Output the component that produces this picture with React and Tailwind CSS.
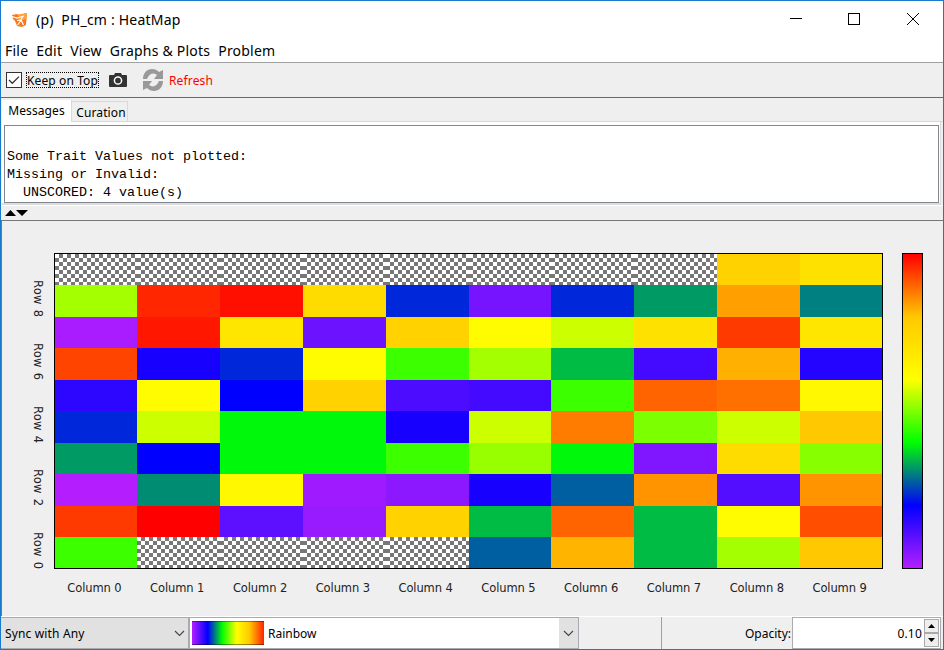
import React from "react";

const UI = "font-['Noto_Sans','Open_Sans',sans-serif]";

const cells = [
  ["x", "x", "x", "x", "x", "x", "x", "x", "#ffd200", "#ffe100"],
  ["#a4ff00", "#ff2600", "#ff0f00", "#ffdc00", "#0028da", "#7714ff", "#0028da", "#009a65", "#ffa000", "#008080"],
  ["#a81cff", "#ff1700", "#ffe600", "#6c12ff", "#ffd200", "#fffb00", "#ccff00", "#ffe100", "#ff3a00", "#ffe600"],
  ["#ff4400", "#1800ff", "#0028da", "#fffb00", "#3cff00", "#a4ff00", "#00bb44", "#440aff", "#ffb000", "#2404ff"],
  ["#2c06ff", "#fffb00", "#0000ff", "#ffd200", "#4c0cff", "#440aff", "#3cff00", "#ff6400", "#ff7000", "#fff800"],
  ["#0028da", "#ccff00", "#00f80a", "#00f80a", "#1800ff", "#ccff00", "#ff7c00", "#7cff00", "#ccff00", "#ffc800"],
  ["#009a65", "#0000ff", "#00f80a", "#00f80a", "#3cff00", "#98ff00", "#00f80a", "#8016ff", "#ffdc00", "#88ff00"],
  ["#b41eff", "#008c73", "#fff800", "#a01aff", "#8c18ff", "#1800ff", "#005fa0", "#ff9400", "#540eff", "#ff9400"],
  ["#ff3a00", "#ff0000", "#5c10ff", "#981aff", "#ffd200", "#00bb44", "#ff6400", "#00bb44", "#fffb00", "#ff4e00"],
  ["#3cff00", "x", "x", "x", "x", "#005fa0", "#ffb400", "#00bb44", "#a4ff00", "#ffc800"],
];

function Chevron() {
  return (
    <svg className="mt-px" width="11" height="7" viewBox="0 0 11 7" fill="none" stroke="#444" strokeWidth="1.1">
      <path d="M1 1l4.5 4.5L10 1" />
    </svg>
  );
}

function TitleBar() {
  return (
    <div className="flex h-[38px] shrink-0 items-center pb-[2px] pl-[10px]">
      <svg className="mt-px" width="17" height="16" viewBox="0 0 17 16">
        <path d="M1 3L6 2 8 3 16 1 15 13 11 15 6 14 4 9 2 7z" fill="#f47b20" />
        <path d="M7 2.500l9-1.500-.6 6-7 2z" fill="#ffa23a" />
        <path d="M1 4.500l5 1.500 7-2M11.500 5l-2 4-3 4M6 8.500l4-.5 2.500 5" stroke="#fff" strokeWidth="1.2" fill="none" />
      </svg>
      <span className="ml-[8px] whitespace-pre text-[14px] tracking-[0.2px]">(p)  PH_cm : HeatMap</span>
      <svg className="ml-auto mr-[22px]" width="132" height="14" viewBox="0 0 132 14" fill="none" stroke="#000" shapeRendering="crispEdges">
        <path d="M1 6.5h12" />
        <rect x="59.5" y="1.5" width="11" height="11" />
        <path d="M118 1l12 12M130 1l-12 12" shapeRendering="auto" />
      </svg>
    </div>
  );
}

function Toolbar() {
  return (
    <div className="flex h-[35px] shrink-0 items-center border-t border-[#a0a0a0] bg-[#efefef] pl-[5px] text-[12px]">
      <svg width="16" height="16" viewBox="0 0 16 16" fill="#fff" stroke="#333">
        <rect x=".5" y=".5" width="15" height="15" />
        <path d="M3 8l3.3 3.3L13 4.6" fill="none" strokeWidth="1.3" />
      </svg>
      <span className="ml-[4px] flex h-[16px] w-[73px] items-center justify-center whitespace-nowrap border border-dotted border-black pt-[2px] tracking-[0.1px]">Keep on Top</span>
      <svg className="ml-[10px]" width="18" height="14" viewBox="0 0 18 14">
        <path d="M1 2h4l1-2h6l1 2h4q1 0 1 1v10q0 1-1 1H1q-1 0-1-1V3q0-1 1-1z" fill="#333" />
        <circle cx="9" cy="7.5" r="3.6" fill="none" stroke="#fff" strokeWidth="1.5" />
      </svg>
      <svg className="ml-[15px]" width="22" height="22" viewBox="0 0 22 22" fill="#999">
        <path d="M1 10C1 4 5 0 10 0c3 0 5 1 7 3l4-2v9h-9l3-4C11 3 7 5 5 10z" />
        <path d="M21 12c0 6-4 10-9 10-3 0-5-1-7-3l-4 2v-9h9l-3 4c4 3 8 1 10-4z" />
      </svg>
      <span className="ml-[5px] pt-[2px] tracking-[0.15px] text-[#ff0000]">Refresh</span>
    </div>
  );
}

function Messages() {
  return (
    <div className="h-[109px] shrink-0 border-t border-[#696969] bg-[#efefef] pl-px">
      <div className="flex h-[24px] items-end pt-[2px] text-[12px] tracking-[0.1px]">
        <div className="flex h-[22px] w-[70px] items-center justify-center border-r border-[#d9d9d9] bg-white">Messages</div>
        <div className="flex h-[21px] w-[56px] items-center justify-center border-b border-r border-t border-[#d9d9d9] pl-[3px] pt-[2px]">Curation</div>
        <div className="h-px flex-1 bg-[#d9d9d9]" />
      </div>
      <div className="mr-[2px] border-b-2 border-r border-[#dcdcdc] bg-white pl-[2px] pr-px pt-[3px]">
        <pre className="h-[78px] border border-[#828790] pl-[2px] pt-[4px] font-['Liberation_Mono',monospace] text-[13.33px] leading-[18px]">
          {"\nSome Trait Values not plotted:\nMissing or Invalid:\n  UNSCORED: 4 value(s)"}
        </pre>
      </div>
      <div className="h-[2px] bg-white" />
    </div>
  );
}

function HeatMap() {
  return (
    <div className="grid grid-cols-[82px_83px_83px_83px_83px_82px_83px_83px_83px_82px] grid-rows-[31px_32px_31px_32px_31px_32px_31px_32px_31px_31px] border border-black">
      {cells.flat().map((c, i) =>
        c === "x" ? (
          <div key={i} className="bg-[conic-gradient(#777_25%,#fff_0_50%,#777_0_75%,#fff_0)] bg-[length:8px_8px]" />
        ) : (
          <div key={i} style={{ backgroundColor: c }} />
        )
      )}
    </div>
  );
}

function Plot() {
  return (
    <div className="h-[396px] shrink-0 border-l border-t border-[#777] bg-[#efefef] pt-[32px] font-['DejaVu_Sans',sans-serif] text-[11.5px] tracking-[-0.1px] text-[#222]">
      <div className="flex h-[316px] items-start">
        <div className="flex w-[52px] flex-col pl-[27px] pt-[27px]">
          {[8, 6, 4, 2, 0].map((n) => (
            <div key={n} className="h-[63px] w-[18px] whitespace-nowrap leading-[18px] tracking-[0.3px] [word-spacing:1px] [writing-mode:vertical-rl]">Row {n}</div>
          ))}
        </div>
        <HeatMap />
        <div className="ml-[19px] h-[316px] w-[21px] border border-black bg-[linear-gradient(#f00,#ffc800_20%,#ff0_40%,#0f0_60%,#00f_80%,#b41eff)]" />
      </div>
      <div className="mt-[10px] flex pl-[51px] leading-[18px]">
        {cells.map((_, n) => (
          <div key={n} className="w-[82.8px] text-center">Column {n}</div>
        ))}
      </div>
    </div>
  );
}

function BottomBar() {
  return (
    <div className="flex h-[33px] shrink-0 border-t border-white bg-[#efefef] text-[12px]">
      <div className="flex w-[188px] items-center justify-between border border-l-0 border-[#a9abb0] bg-[#e1e1e1] pl-[4px] pr-[3px]">
        <span className="pt-[2px] tracking-[0.15px]">Sync with Any</span><Chevron />
      </div>
      <div className="flex w-[390px] items-center border border-[#a9abb0] bg-white pl-[2px]">
        <div className="h-[24px] w-[72px] border-y border-black/40 bg-[linear-gradient(90deg,#b41eff,#00f_22%,#0f0_42%,#ff0_62%,#ffc800_80%,#f20)]" />
        <span className="ml-[4px] pt-[2px]">Rainbow</span>
        <div className="ml-auto flex h-full w-[19px] items-center justify-center bg-[#e1e1e1]"><Chevron /></div>
      </div>
      <div className="w-[83px] border-r border-[#a0a0a0]" />
      <div className="flex flex-1 items-center justify-end pr-px pt-[2px]">Opacity:</div>
      <div className="mr-[2px] flex w-[149px] items-center border border-[#a9abb0] bg-white pr-px">
        <span className="ml-auto mr-[2px] pt-[2px] tracking-[0.2px]">0.10</span>
        <div className="flex flex-col">
          {["M0 4h7L3.5 0z", "M0 0h7L3.5 4z"].map((d) => (
            <div key={d} className="flex h-[14px] w-[15px] items-center justify-center border border-[#aaa] bg-[#eee]">
              <svg width="7" height="4" viewBox="0 0 7 4"><path d={d} /></svg>
            </div>
          ))}
        </div>
      </div>
    </div>
  );
}

export default function App() {
  return (
    <div className={`flex h-[650px] w-[944px] flex-col overflow-hidden border border-[#1979ca] bg-white text-black ${UI}`}>
      <TitleBar />
      <div className="flex h-[23px] shrink-0 items-center gap-[8px] pb-px pl-[4px] text-[14px] tracking-[0.22px]">
        <span>File</span><span>Edit</span><span>View</span><span>Graphs &amp; Plots</span><span>Problem</span>
      </div>
      <Toolbar />
      <Messages />
      <div className="flex h-[14px] shrink-0 items-center bg-[#efefef] pl-[4px]">
        <svg width="23" height="6" viewBox="0 0 23 6"><path d="M0 6h11L5.500 0zM11 0h12L17 6z" /></svg>
      </div>
      <Plot />
      <BottomBar />
    </div>
  );
}
